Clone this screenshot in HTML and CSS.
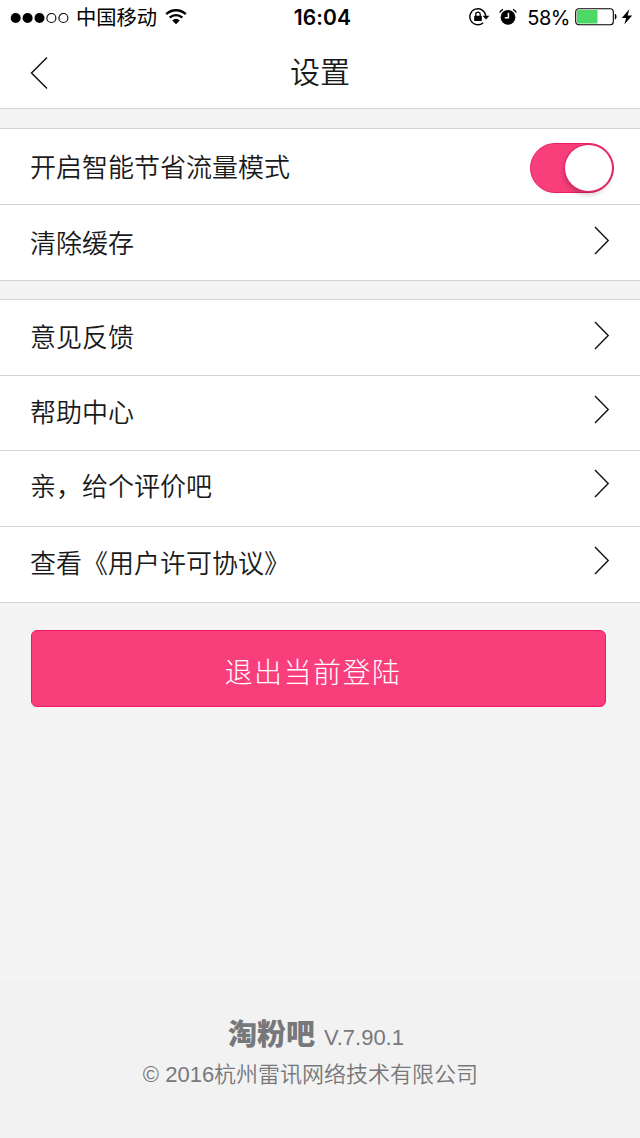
FILE: index.html
```html
<!DOCTYPE html>
<html lang="zh-CN">
<head>
    <meta charset="UTF-8">
    <meta name="viewport" content="width=device-width, initial-scale=1.0">
    <title>设置</title>
    <link rel="stylesheet" href="styles.css">
</head>
<body>
    <div class="status-bar">
        <div class="carrier">
            <svg class="signal" width="60" height="12" viewBox="0 0 60 12">
                <circle cx="5.7" cy="6" r="5"/>
                <circle cx="17.6" cy="6" r="5"/>
                <circle cx="29.5" cy="6" r="5"/>
                <circle class="empty" cx="41.4" cy="6" r="4.5"/>
                <circle class="empty" cx="53.4" cy="6" r="4.5"/>
            </svg>
            <span class="carrier-name">中国移动</span>
            <svg class="wifi" width="22" height="17" viewBox="0 0 22 17">
                <path d="M1.2 6.2a14 14 0 0 1 19.6 0M4.7 9.7a9 9 0 0 1 12.6 0" fill="none" stroke="#000" stroke-width="2.4"/>
                <path d="M7.2 12.4a5.4 5.4 0 0 1 7.6 0L11 16.2z"/>
            </svg>
        </div>
        <span class="clock">16:04</span>
        <div class="indicators">
            <svg class="rotation-lock" width="21" height="18" viewBox="0 0 21 18">
                <path d="M14.2 14.7a8 8 0 1 1 2.6-6.8" fill="none" stroke="#000" stroke-width="1.4"/>
                <path d="M13.6 7.8h6.8L17 11.6z"/>
                <rect x="5.2" y="7.7" width="7.6" height="5.4" rx=".6"/>
                <path d="M6.8 8V6.3a2.2 2.2 0 0 1 4.4 0V8" fill="none" stroke="#000" stroke-width="1.3"/>
            </svg>
            <svg class="alarm" width="18" height="18" viewBox="0 0 18 18">
                <circle cx="9" cy="9.3" r="7.4"/>
                <path d="M.8 4.6Q1.6 2.4 4 1.4M17.2 4.6Q16.4 2.4 14 1.4" fill="none" stroke="#000" stroke-width="1.4"/>
                <path d="M9.4 4.8v4.9H5.8" fill="none" stroke="#fff" stroke-width="1.5"/>
            </svg>
            <span class="percent">58%</span>
            <svg class="battery" width="43" height="18" viewBox="0 0 43 18">
                <rect x=".7" y=".7" width="37.6" height="16" rx="3" fill="#fff" stroke="#000" stroke-width="1.1"/>
                <rect x="2" y="2" width="20.5" height="13.4" rx="1" fill="#4cd964"/>
                <path d="M39.8 5.8c2.3.5 2.3 5.3 0 5.8z"/>
            </svg>
            <svg class="bolt" width="12" height="18" viewBox="0 0 12 18">
                <path d="M8.3 1.2.8 10h4.4L3.3 16.6 11.2 7.4H6.6z"/>
            </svg>
        </div>
    </div>

    <div class="navbar">
        <svg class="back" width="20" height="34" viewBox="0 0 20 34">
            <path d="M18 1.5 2.5 17 18 32.5"/>
        </svg>
        <h1 class="title">设置</h1>
    </div>

    <ul class="group first">
        <li class="row">
            <span class="label">开启智能节省流量模式</span>
            <span class="switch"><i class="knob"></i></span>
        </li>
        <li class="row">
            <span class="label">清除缓存</span>
            <svg class="arrow" width="16" height="29" viewBox="0 0 16 29"><path d="M1 1 14.2 14.5 1 28"/></svg>
        </li>
    </ul>

    <ul class="group second">
        <li class="row feedback">
            <span class="label">意见反馈</span>
            <svg class="arrow" width="16" height="29" viewBox="0 0 16 29"><path d="M1 1 14.2 14.5 1 28"/></svg>
        </li>
        <li class="row help">
            <span class="label">帮助中心</span>
            <svg class="arrow" width="16" height="29" viewBox="0 0 16 29"><path d="M1 1 14.2 14.5 1 28"/></svg>
        </li>
        <li class="row rate">
            <span class="label">亲，给个评价吧</span>
            <svg class="arrow" width="16" height="29" viewBox="0 0 16 29"><path d="M1 1 14.2 14.5 1 28"/></svg>
        </li>
        <li class="row license">
            <span class="label">查看《用户许可协议》</span>
            <svg class="arrow" width="16" height="29" viewBox="0 0 16 29"><path d="M1 1 14.2 14.5 1 28"/></svg>
        </li>
    </ul>

    <button class="logout">退出当前登陆</button>

    <div class="footer">
        <div class="version">
            <span class="logo">淘粉吧</span>
            <span>V.7.90.1</span>
        </div>
        <div class="copyright">© 2016杭州雷讯网络技术有限公司</div>
    </div>
</body>
</html>
```
FILE: styles.css
```css
* {
    box-sizing: border-box;
}
body {
    margin: 0;
    height: 1138px;
    display: flex;
    flex-direction: column;
    background-color: #f4f4f4;
    color: #1a1a1a;
    font-family: "Liberation Sans", "Noto Sans CJK SC", sans-serif;
}
svg {
    display: block;
    flex: none;
}

/* status bar */
.status-bar {
    display: grid;
    grid-template-columns: 1fr auto 1fr;
    align-items: center;
    height: 36px;
    padding: 0 8px 0 10px;
    background-color: #fff;
    color: #000;
    line-height: 36px;
}
.carrier,
.indicators {
    display: flex;
    align-items: center;
}
.signal {
    margin-bottom: 1px;
}
.empty {
    fill: none;
    stroke: #000;
    stroke-width: 1.1;
}
.carrier-name {
    margin-left: 6px;
    font-size: 20.3px;
}
.wifi {
    margin-left: 8px;
    margin-bottom: 3px;
}
.clock {
    padding-left: 3px;
    font-family: Inter, sans-serif;
    font-size: 21px;
    font-weight: 600;
    letter-spacing: 0.1px;
}
.indicators {
    justify-content: flex-end;
    margin-right: -1px;
}
.alarm {
    margin-left: 9px;
}
.rotation-lock,
.alarm,
.battery,
.bolt {
    margin-bottom: 2px;
}
.percent {
    margin-left: 10px;
    font-family: Inter, sans-serif;
    font-size: 20px;
    letter-spacing: -0.5px;
}
.battery {
    margin-left: 5px;
}
.bolt {
    margin-left: 3px;
}

/* nav bar */
.navbar {
    display: grid;
    grid-template-columns: 100px 1fr 100px;
    align-items: center;
    height: 73px;
    border-bottom: 1px solid #d3d3d3;
    background-color: #fff;
}
.back {
    margin: 2px 0 0 29px;
    fill: none;
    stroke: #111;
    stroke-width: 1.5;
}
.title {
    margin: 0;
    padding-top: 2px;
    font-size: 30px;
    font-weight: 350;
    line-height: 70px;
    text-align: center;
}

/* settings list */
.group {
    margin: 0;
    padding: 0;
    list-style: none;
    background-color: #fff;
    border-top: 1px solid #d3d3d3;
}
.first {
    margin-top: 19px;
}
.second {
    margin-top: 18px;
}
.row {
    display: flex;
    align-items: center;
    justify-content: space-between;
    height: 76px;
    padding: 0 30px;
    border-bottom: 1px solid #d3d3d3;
    font-size: 26px;
    font-weight: 350;
}
.label {
    margin-bottom: 3px;
}
.arrow {
    margin-bottom: 5px;
    fill: none;
    stroke: #111;
    stroke-width: 1.4;
}
.feedback .label {
    margin-bottom: 5px;
}
.help {
    height: 75px;
    padding-bottom: 2px;
}
.rate {
    padding-bottom: 6px;
}
.license {
    padding-bottom: 4px;
}
.switch {
    display: flex;
    justify-content: flex-end;
    width: 84px;
    height: 50px;
    margin: 2px -4px 0 0;
    padding: 1px;
    border: 1px solid #ea1f62;
    border-radius: 25px;
    background-color: #f83e7b;
}
.knob {
    width: 47px;
    height: 46px;
    border-radius: 50%;
    background-color: #fff;
    box-shadow: 0 0 0 1px #e32563, -1px 4px 5px rgba(0, 0, 0, 0.2);
}

.logout {
    width: 575px;
    height: 77px;
    margin: 27px 0 0 31px;
    padding: 5px 11px 0 0;
    border: 1px solid #f01861;
    border-radius: 6px;
    background-color: #f83e7b;
    color: #fff;
    font-family: inherit;
    font-size: 28px;
    font-weight: 300;
    letter-spacing: 1.5px;
}

/* footer */
.footer {
    height: 158px;
    margin-top: auto;
    padding: 32px 20px 0 0;
    background-color: #f2f2f2;
    color: #77787b;
    font-size: 22px;
    text-align: center;
}
.version {
    display: flex;
    justify-content: center;
    align-items: baseline;
    gap: 9px;
    height: 44px;
    padding-left: 12px;
    line-height: 40px;
}
.logo {
    font-family: "Noto Sans CJK SC", sans-serif;
    font-size: 29px;
    font-weight: 900;
}
.copyright {
    padding-left: 1px;
    font-weight: 350;
    line-height: 37px;
}
```
